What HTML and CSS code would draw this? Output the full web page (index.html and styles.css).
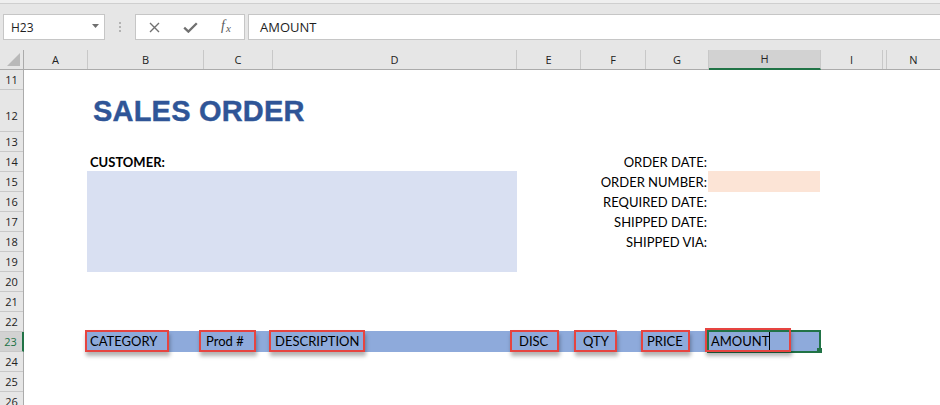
FILE: index.html
```html
<!DOCTYPE html>
<html lang="en">
<head>
<meta charset="utf-8">
<title>Sales Order</title>
<link rel="stylesheet" href="styles.css">
</head>
<body>
<div class="ribbon-edge"></div>
<div class="formula-bar">
  <div class="name-box">
    <span>H23</span>
    <svg class="name-arrow" width="7" height="4" viewBox="0 0 7 4"><polygon points="0,0 7,0 3.5,4" fill="#6f6f6f"/></svg>
  </div>
  <div class="grip"><i></i><i></i><i></i></div>
  <div class="fx-box">
    <div class="fx-slot">
      <svg width="11" height="11" viewBox="0 0 11 11"><path d="M1 1 L10 10 M10 1 L1 10" stroke="#707070" stroke-width="1.4" fill="none"/></svg>
    </div>
    <div class="fx-slot">
      <svg width="15" height="11" viewBox="0 0 15 11"><path d="M1.2 5.6 L5.4 9.6 L13.8 1.2" stroke="#707070" stroke-width="2.3" fill="none"/></svg>
    </div>
    <div class="fx-slot fx-label"><span class="fx-f">f</span><span class="fx-x">x</span></div>
  </div>
  <div class="formula-input">AMOUNT</div>
</div>

<div class="col-headers">
  <div class="ch ch-corner"><svg width="13" height="13" viewBox="0 0 13 13"><polygon points="13,0 13,13 0,13" fill="#b9b9b9"/></svg></div>
  <div class="ch w-a">A</div>
  <div class="ch w-b">B</div>
  <div class="ch w-c">C</div>
  <div class="ch w-d">D</div>
  <div class="ch w-e">E</div>
  <div class="ch w-f">F</div>
  <div class="ch w-g">G</div>
  <div class="ch w-h ch-active">H</div>
  <div class="ch w-i">I</div>
  <div class="ch w-hid"></div>
  <div class="ch w-n">N</div>
</div>

<div class="sheet-body">
  <div class="row-headers">
    <div class="rh">11</div>
    <div class="rh rh-tall">12</div>
    <div class="rh">13</div>
    <div class="rh">14</div>
    <div class="rh">15</div>
    <div class="rh">16</div>
    <div class="rh">17</div>
    <div class="rh">18</div>
    <div class="rh">19</div>
    <div class="rh">20</div>
    <div class="rh">21</div>
    <div class="rh">22</div>
    <div class="rh rh-active">23</div>
    <div class="rh">24</div>
    <div class="rh">25</div>
    <div class="rh">26</div>
  </div>

  <div class="cells">
    <div class="title">SALES ORDER</div>
    <div class="customer-label">CUSTOMER:</div>
    <div class="customer-box"></div>

    <div class="info-labels">
      <div>ORDER DATE:</div>
      <div>ORDER NUMBER:</div>
      <div>REQUIRED DATE:</div>
      <div>SHIPPED DATE:</div>
      <div>SHIPPED VIA:</div>
    </div>
    <div class="order-number-cell"></div>

    <div class="header-band"></div>
    <div class="selection"></div>

    <div class="tag tag-cat">CATEGORY</div>
    <div class="tag tag-prod">Prod #</div>
    <div class="tag tag-desc">DESCRIPTION</div>
    <div class="tag tag-disc">DISC</div>
    <div class="tag tag-qty">QTY</div>
    <div class="tag tag-price">PRICE</div>
    <div class="tag tag-amount"><span class="caret">AMOUNT</span></div>
  </div>
</div>
</body>
</html>
```

FILE: styles.css
```css
* { box-sizing: border-box; }

html, body {
  margin: 0;
  padding: 0;
}

body {
  width: 940px;
  height: 405px;
  overflow: hidden;
  background: #ffffff;
  font-family: "Lato", "Liberation Sans", sans-serif;
  color: #000;
}

/* ---------- top chrome ---------- */
.ribbon-edge {
  height: 4px;
  background: #efefef;
  border-bottom: 1px solid #cfcfcf;
}

.formula-bar {
  height: 46px;
  background: #e6e6e6;
  display: flex;
  align-items: flex-start;
  padding: 10px 0 0 3px;
  font-family: "Open Sans", "Noto Sans", sans-serif;
}

.name-box {
  width: 102px;
  height: 26px;
  background: #ffffff;
  border: 1px solid #c6c6c6;
  display: flex;
  align-items: center;
  justify-content: space-between;
  padding: 0 5px 0 7px;
  font-size: 12px;
  color: #1e1e1e;
}

.name-arrow { margin-top: -3px; }

.grip {
  width: 30px;
  display: flex;
  flex-direction: column;
  align-items: center;
  gap: 2px;
  padding-top: 8px;
}

.grip i {
  display: block;
  width: 2px;
  height: 2px;
  background: #b3b3b3;
}

.fx-box {
  width: 110px;
  height: 26px;
  background: #ffffff;
  border: 1px solid #c6c6c6;
  display: flex;
}

.fx-slot {
  width: 36px;
  display: flex;
  align-items: center;
  justify-content: center;
}

.fx-label {
  width: 36px;
  font-family: "Liberation Serif", serif;
  font-style: italic;
  color: #5a5a5a;
  font-size: 14px;
  padding-bottom: 2px;
}

.fx-x {
  font-size: 11px;
  margin-left: 1px;
  margin-top: 3px;
}

.formula-input {
  flex: 1;
  margin-left: 3px;
  height: 26px;
  background: #ffffff;
  border: 1px solid #c6c6c6;
  border-right: none;
  padding-left: 11px;
  font-size: 13px;
  line-height: 24px;
  color: #1e1e1e;
}

/* ---------- column headers ---------- */
.col-headers {
  display: flex;
  height: 20px;
  background: #e6e6e6;
  border-bottom: 1px solid #ababab;
  font-family: "Open Sans", "Noto Sans", sans-serif;
  font-size: 11px;
  color: #222;
}

.ch {
  flex: none;
  height: 19px;
  line-height: 19px;
  text-align: center;
  border-right: 1px solid #c8c8c8;
}

.ch-corner {
  width: 24px;
  border-right-color: #ababab;
  display: flex;
  align-items: flex-end;
  justify-content: flex-end;
  padding: 0 3px 3px 0;
}

.w-a { width: 64px; }
.w-b { width: 116px; }
.w-c { width: 69px; }
.w-d { width: 244px; }
.w-e { width: 64px; }
.w-f { width: 65px; }
.w-g { width: 63px; }
.w-h { width: 112px; }
.w-i { width: 62px; }
.w-hid { width: 4px; }
.w-n { flex: 1; border-right: none; }

.ch-active {
  background: #d2d2d2;
  color: #262626;
  height: 20px;
  margin-bottom: -1px;
  border-bottom: 2px solid #217346;
  line-height: 18px;
}

/* ---------- sheet body ---------- */
.sheet-body {
  display: flex;
}

.row-headers {
  width: 24px;
  flex: none;
  background: #e6e6e6;
  border-right: 1px solid #ababab;
  font-family: "Open Sans", "Noto Sans", sans-serif;
  font-size: 11px;
  color: #222;
}

.rh {
  height: 20px;
  line-height: 19px;
  text-align: center;
  border-bottom: 1px solid #c8c8c8;
}

.rh-tall {
  height: 42px;
  line-height: 19px;
  padding-top: 16px;
}

.rh-active {
  background: #d2d2d2;
  color: #217346;
  margin-right: -1px;
  border-right: 2px solid #217346;
  padding-right: 1px;
}

.cells {
  flex: 1;
  display: grid;
  grid-template-columns: 64px 116px 69px 244px 64px 65px 63px 112px 62px 4px 1fr;
  grid-template-rows: 20px 42px repeat(14, 20px);
  font-size: 13px;
  line-height: 20px;
}

.title {
  grid-column: 2 / 5;
  grid-row: 2;
  align-self: end;
  margin-bottom: 4px;
  padding-left: 5px;
  font-family: "Liberation Sans", Arial, sans-serif;
  font-weight: bold;
  font-size: 29px;
  line-height: 34px;
  letter-spacing: 0.2px;
  color: #2f5597;
  -webkit-text-stroke: 0.4px #2f5597;
  white-space: nowrap;
}

.customer-label {
  grid-column: 2 / 4;
  grid-row: 4;
  padding-left: 2px;
  font-weight: bold;
  white-space: nowrap;
}

.customer-box {
  grid-column: 2 / 5;
  grid-row: 5 / 10;
  margin: -1px 0 0 -1px;
  background: #d9e0f2;
}

.info-labels {
  grid-column: 5 / 8;
  grid-row: 4 / 9;
  display: flex;
  flex-direction: column;
  text-align: right;
  padding-right: 2px;
  white-space: nowrap;
}

.info-labels div { height: 20px; }

.order-number-cell {
  grid-column: 8;
  grid-row: 5;
  margin: -1px 1px 0 -1px;
  background: #fce4d6;
}

.header-band {
  grid-column: 2 / 9;
  grid-row: 13;
  margin: -1px 0 0 -1px;
  background: #8eaadb;
}

.selection {
  grid-column: 8;
  grid-row: 13;
  margin: -2px 0 -1px -2px;
  border: 2px solid #217346;
  position: relative;
}

.selection::after {
  content: "";
  position: absolute;
  right: -3px;
  bottom: -2px;
  width: 5px;
  height: 5px;
  background: #217346;
}

/* annotation boxes */
.tag {
  grid-row: 13;
  align-self: start;
  justify-self: start;
  position: relative;
  height: 22px;
  margin-top: -2px;
  border: 2px solid #e64440;
  box-shadow: 1px 4px 4px rgba(0, 0, 0, 0.3);
  line-height: 18px;
  white-space: nowrap;
}

.tag-cat   { grid-column: 2; width: 84px; margin-left: -3px; padding-left: 3px; }
.tag-prod  { grid-column: 3; width: 57px; margin-left: -5px; padding-left: 5px; }
.tag-desc  { grid-column: 4; width: 96px; margin-left: -4px; padding-left: 4px; }
.tag-disc  { grid-column: 5; width: 49px; margin-left: -7px; padding-left: 7px; }
.tag-qty   { grid-column: 6; width: 43px; margin-left: -7px; padding-left: 7px; }
.tag-price { grid-column: 7; width: 49px; margin-left: -5px; padding-left: 4px; }
.tag-amount {
  grid-column: 8;
  width: 86px;
  height: 24px;
  margin-top: -4px;
  margin-left: -4px;
  padding-left: 4px;
  padding-top: 2px;
}

.caret {
  display: inline-block;
  height: 18px;
  border-right: 1px solid #000;
}
```
